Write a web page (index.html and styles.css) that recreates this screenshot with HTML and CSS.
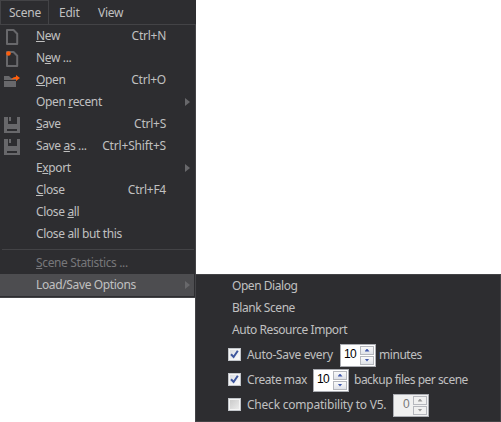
FILE: index.html
```html
<!DOCTYPE html>
<html lang="en">
<head>
<meta charset="utf-8">
<title>Scene menu</title>
<link rel="stylesheet" href="styles.css">
</head>
<body>
<svg width="0" height="0" class="defs" aria-hidden="true">
  <symbol id="page" viewBox="0 0 16 16"><path d="M1 1H7.5L11.2 4.7V15H1Z" fill="none" stroke="#68686b" stroke-width="2" stroke-linejoin="round"/></symbol>
  <symbol id="floppy" viewBox="0 0 16 16"><path fill="#68686b" fill-rule="evenodd" d="M0 0H4V7H13V0H16V16H0ZM3 12V14H13V12Z"/><path fill="#68686b" d="M5 0H7V4H5Z"/></symbol>
  <symbol id="arrow" viewBox="0 0 5 8"><path d="M0 0L5 4L0 8Z" fill="#68686b"/></symbol>
</svg>
<nav class="menubar"><span class="tab active">Scene</span><span class="tab edit">Edit</span><span class="tab">View</span></nav>
<main class="menus">
<div class="menu">
  <div class="item"><i class="icon"><svg class="doc" width="16" height="16"><use href="#page"/></svg></i><span class="label"><u>N</u>ew</span><kbd>Ctrl+N</kbd></div>
  <div class="item"><i class="icon"><svg class="doc" width="16" height="16"><use href="#page"/><circle cx="2.5" cy="2.5" r="2.3" fill="#ff5e0c"/></svg></i><span class="label">N<u>e</u>w ...</span></div>
  <div class="item"><i class="icon"><svg width="16" height="16" viewBox="0 0 16 16"><path d="M0 3H5L7 5H12V7H0ZM0 8H12V14H0Z" fill="#68686b"/><path d="M7 6.8Q9 3.8 12 3.8V2L16 5L12 8V6Q9 5.8 7 6.8Z" fill="#ff5e0c"/></svg></i><span class="label"><u>O</u>pen</span><kbd>Ctrl+O</kbd></div>
  <div class="item"><i class="icon"></i><span class="label">Open <u>r</u>ecent</span><svg class="more" width="5" height="8"><use href="#arrow"/></svg></div>
  <div class="item"><i class="icon"><svg width="16" height="16"><use href="#floppy"/></svg></i><span class="label"><u>S</u>ave</span><kbd>Ctrl+S</kbd></div>
  <div class="item"><i class="icon"><svg width="16" height="16"><use href="#floppy"/></svg></i><span class="label">Save <u>a</u>s ...</span><kbd class="wide">Ctrl+Shift+S</kbd></div>
  <div class="item"><i class="icon"></i><span class="label">E<u>x</u>port</span><svg class="more" width="5" height="8"><use href="#arrow"/></svg></div>
  <div class="item"><i class="icon"></i><span class="label"><u>C</u>lose</span><kbd>Ctrl+F4</kbd></div>
  <div class="item"><i class="icon"></i><span class="label">Close <u>a</u>ll</span></div>
  <div class="item"><i class="icon"></i><span class="label">Close all but this</span></div>
  <hr>
  <div class="item disabled"><i class="icon"></i><span class="label"><u>S</u>cene Statistics ...</span></div>
  <div class="item hover"><i class="icon"></i><span class="label">Load/Save Options</span><svg class="more" width="5" height="8"><use href="#arrow"/></svg></div>
</div>
<div class="submenu">
  <div class="item">Open Dialog</div>
  <div class="item">Blank Scene</div>
  <div class="item">Auto Resource Import</div>
  <div class="option"><span class="check"><svg width="9" height="9" viewBox="0 0 9 9"><path d="M1 4.2L3.6 7L7.8 .8" /></svg></span><span class="w1">Auto-Save every</span><span class="spin"><b>10</b><span class="btns"><i class="up"></i><i class="down"></i></span></span><span>minutes</span></div>
  <div class="option"><span class="check"><svg width="9" height="9" viewBox="0 0 9 9"><path d="M1 4.2L3.6 7L7.8 .8" /></svg></span><span class="w2">Create max</span><span class="spin"><b>10</b><span class="btns"><i class="up"></i><i class="down"></i></span></span><span class="tail">backup files per scene</span></div>
  <div class="option"><span class="check off"></span><span class="w3">Check compatibility to V5.</span><span class="spin off"><b>0</b><span class="btns"><i class="up"></i><i class="down"></i></span></span></div>
</div>
</main>
</body>
</html>
```
FILE: styles.css
```css
* { box-sizing: border-box; }
body { margin: 0; width: 501px; height: 422px; overflow: hidden; background: #fff; color: #c0c0c0; font: 12px/22px "Noto Sans", "Open Sans", sans-serif; letter-spacing: -.25px; }
.defs { position: absolute; }
.menubar { display: flex; width: 196px; height: 24px; background: #2d2d30; }
.tab { height: 24px; padding: 2px 9px 0; white-space: nowrap; }
.active { width: 49px; padding-left: 8px; border: 1px solid #434346; border-bottom: 0; padding-top: 1px; }
.edit { width: 40px; padding-left: 10px; }
.menus { display: flex; align-items: flex-start; }
.menu { width: 196px; height: 274px; flex: none; padding: 0 1px 1px 0; border: solid #434346; border-width: 1px 1px 1px 0; background: #2d2d30; }
.item { display: flex; align-items: center; height: 22px; white-space: nowrap; }
.icon { width: 36px; height: 22px; padding: 4px 4px 0; flex: none; }
.icon svg { display: block; overflow: visible; }
.icon .doc { margin-left: 2px; }
.label { flex: 1; letter-spacing: -.36px; }
u { text-decoration-thickness: 1px; text-underline-offset: 1px; text-decoration-skip-ink: none; }
kbd { font: inherit; margin-right: 28px; }
kbd.wide { letter-spacing: -.17px; }
.more { margin-right: 4px; }
hr { height: 1px; margin: 4px 0 2px 2px; border: 0; background: #434346; }
.disabled { color: #77777a; }
.hover { background: #4d4d50; }
.submenu { width: 306px; height: 148px; margin: 250px 0 0 -1px; flex: none; border: 1px solid #434346; background: #2d2d30; letter-spacing: -.45px; }
.submenu .item { padding-left: 36px; }
.option { display: flex; align-items: center; height: 25px; padding-left: 32px; white-space: nowrap; }
.submenu .item + .option { margin-top: 1px; }
.check { display: grid; place-items: center; width: 13px; height: 13px; margin-right: 6px; border: 1px solid #c2c5ca; background: linear-gradient(135deg, #d5d8dd, #fff); box-shadow: inset 0 0 0 1px #f4f4f4; }
.check path { fill: none; stroke: #3d559c; stroke-width: 2; }
.check.off { background: linear-gradient(135deg, #c7c7c7, #eee); }
.w1 { width: 93px; letter-spacing: -.3px; }
.w2 { width: 66px; }
.w3 { width: 146px; letter-spacing: -.22px; }
.spin { display: flex; width: 36px; height: 23px; padding: 1px; margin: 1px 3px 0 0; border: 1px solid #abadb3; background: #fff; }
.spin b { flex: 1; padding-right: 4px; text-align: right; font: 12px/16px "Liberation Sans", sans-serif; letter-spacing: -.7px; color: #000; }
.tail { margin-left: 2px; letter-spacing: -.5px; }
.btns { display: flex; flex-direction: column; gap: 1px; width: 14px; }
.btns i { display: grid; place-items: center; flex: 1; border: 1px solid #b5b7bd; background: linear-gradient(#fafafa, #dfe2e8); }
.btns i::before { content: ""; width: 5px; height: 3px; background: #4058ac; clip-path: polygon(50% 0, 100% 100%, 0 100%); }
.btns .down::before { clip-path: polygon(0 0, 100% 0, 50% 100%); }
.spin.off { background: #f0f0f0; }
.spin.off b { color: #777; }
.spin.off .btns i { background: #f0f0f0; }
.spin.off i::before { background: #999; }
```
